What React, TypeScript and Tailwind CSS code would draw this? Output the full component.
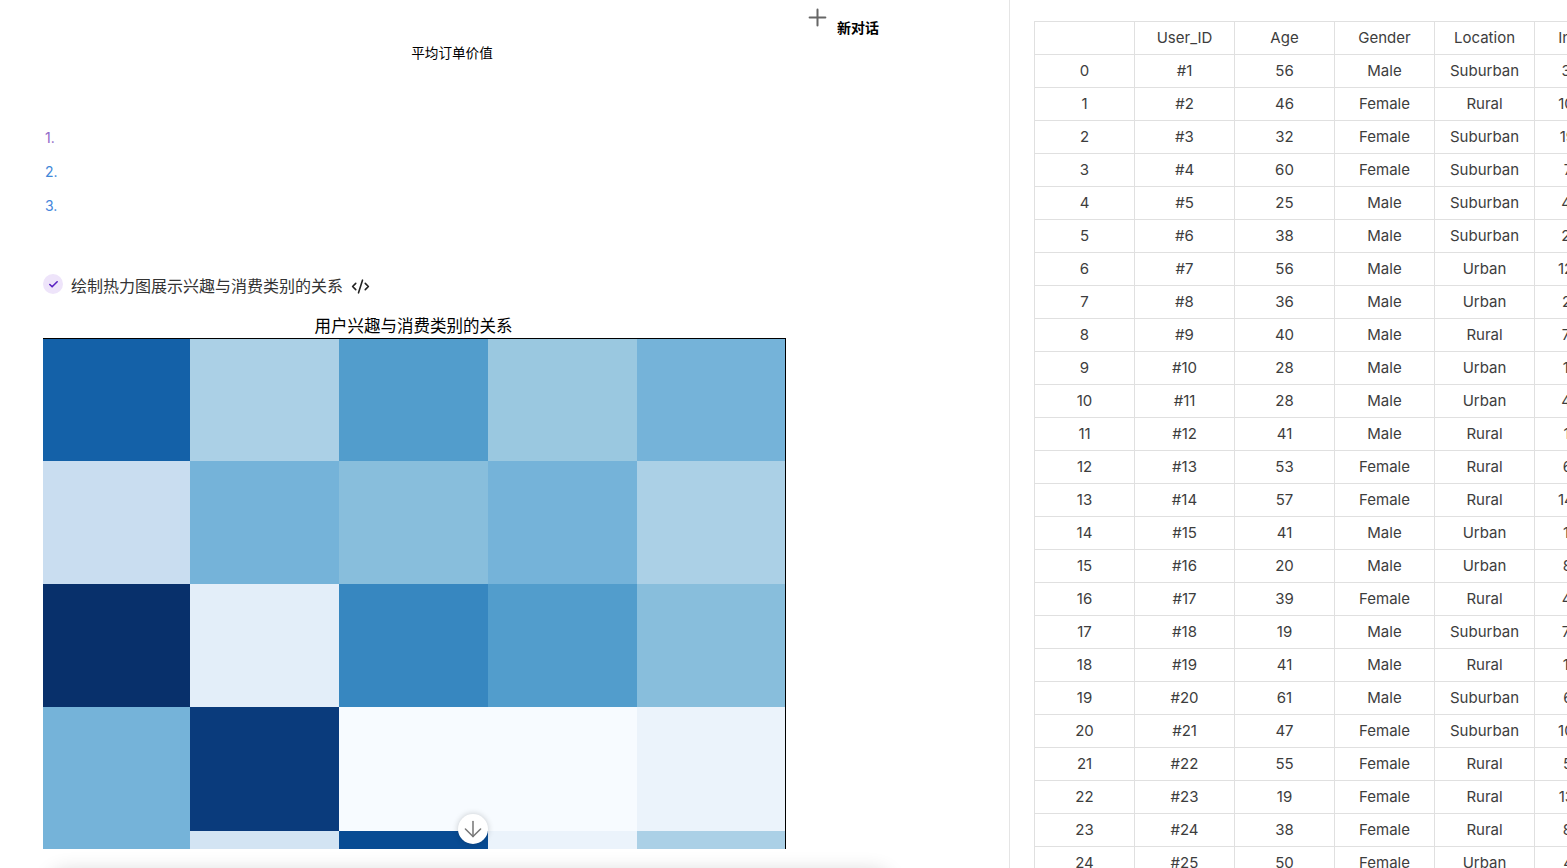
import { ArrowDown, Check, CodeXml, Plus } from 'lucide-react';

const cjk = "font-['Inter','Noto_Sans_CJK_SC',sans-serif]";

const heatmap = [
  ['#1461a8', '#abd0e6', '#529dcc', '#9ac8e0', '#75b3d9'],
  ['#c9ddf0', '#75b3d9', '#88bedc', '#75b3d9', '#abd0e6'],
  ['#08306b', '#e3eef9', '#3787c0', '#529dcc', '#88bedc'],
  ['#75b3d9', '#0a3b7c', '#f7fbff', '#f7fbff', '#ebf3fb'],
  ['#75b3d9', '#d3e4f3', '#084b93', '#ebf3fb', '#abd0e6'],
];

const listItems = [
  { label: '1.', color: 'text-[#9068c8]' },
  { label: '2.', color: 'text-[#3f87d8]' },
  { label: '3.', color: 'text-[#4486dc]' },
];

const columns = ['', 'User_ID', 'Age', 'Gender', 'Location', 'Income'];

const rows: [number, number, string, string, number][] = [
  [1, 56, 'Male', 'Suburban', 38037],
  [2, 46, 'Female', 'Rural', 103986],
  [3, 32, 'Female', 'Suburban', 191942],
  [4, 60, 'Female', 'Suburban', 71276],
  [5, 25, 'Male', 'Suburban', 42869],
  [6, 38, 'Male', 'Suburban', 29053],
  [7, 56, 'Male', 'Urban', 128406],
  [8, 36, 'Male', 'Urban', 26745],
  [9, 40, 'Male', 'Rural', 78560],
  [10, 28, 'Male', 'Urban', 18420],
  [11, 28, 'Male', 'Urban', 46392],
  [12, 41, 'Male', 'Rural', 17605],
  [13, 53, 'Female', 'Rural', 60581],
  [14, 57, 'Female', 'Rural', 148206],
  [15, 41, 'Male', 'Urban', 15938],
  [16, 20, 'Male', 'Urban', 84160],
  [17, 39, 'Female', 'Rural', 43527],
  [18, 19, 'Male', 'Suburban', 75092],
  [19, 41, 'Male', 'Rural', 12846],
  [20, 61, 'Male', 'Suburban', 63719],
  [21, 47, 'Female', 'Suburban', 106254],
  [22, 55, 'Female', 'Rural', 58301],
  [23, 19, 'Female', 'Rural', 132670],
  [24, 38, 'Female', 'Rural', 81495],
  [25, 50, 'Female', 'Urban', 47213],
];

const cellClass = 'h-[33px] border border-[#e0e0e0] p-0 text-center align-middle font-normal';

const App = () => (
  <div className={`flex h-[868px] w-full overflow-hidden bg-white ${cjk}`}>
    <main className="relative h-full w-[1010px] shrink-0 overflow-hidden border-r border-[#e5e5e5]">
      <div className="absolute left-[804px] top-[4px] flex items-start gap-[6px]">
        <Plus className="size-[27px] text-[#666666]" strokeWidth={1.8} />
        <span className="mt-[14px] text-[14px] font-semibold leading-[19px] text-black">新对话</span>
      </div>

      <div className="pl-[43px]">
        <p className="w-[818px] pt-[43px] text-center text-[13.6px] leading-[20px] text-black">平均订单价值</p>

        <ol className="mt-[65px] flex flex-col gap-[14px] pl-[2px] text-[14px] leading-[20px]">
          {listItems.map((item) => (
            <li key={item.label} className={item.color}>
              {item.label}
            </li>
          ))}
        </ol>

        <div className="mt-[58px] flex items-center">
          <span className="flex size-5 -translate-y-[2px] items-center justify-center rounded-full bg-[#eee4fa]">
            <Check className="size-[11px] text-[#5a21c2]" strokeWidth={3.5} />
          </span>
          <span className="ml-[8px] text-[16px] leading-[24px] text-[#333333]">绘制热力图展示兴趣与消费类别的关系</span>
          <CodeXml className="ml-[8px] size-[19px] text-[#222222]" strokeWidth={2} />
        </div>

        <h3 className="mt-[18px] w-[741px] text-center text-[16.5px] font-normal leading-[20px] text-black">
          用户兴趣与消费类别的关系
        </h3>

        <div className="mt-[2px] h-[511px] w-[743px] overflow-hidden border-r border-t border-black">
          <div className="grid grid-cols-[147px_149px_149px_149px_148px] grid-rows-[122px_123px_123px_124px_18px]">
            {heatmap.flat().map((color, index) => (
              <div key={index} style={{ backgroundColor: color }} />
            ))}
          </div>
        </div>
      </div>

      <button className="absolute left-[458px] top-[814px] flex size-[30px] items-center justify-center rounded-full bg-white shadow-[0_0_6px_rgba(0,0,0,0.2)]">
        <ArrowDown className="size-[26px] text-[#777777]" strokeWidth={1.4} />
      </button>

      <div className="absolute left-[50px] top-[871px] h-[100px] w-[840px] rounded-2xl bg-white shadow-[0_0_20px_rgba(0,0,0,0.16)]" />
    </main>

    <section className="min-w-0 flex-1 overflow-hidden pl-[24px] pt-[21px]">
      <table className="w-[601px] table-fixed border-collapse text-[15px] leading-[20px] text-[#3d3d3d]">
        <thead>
          <tr>
            {columns.map((name) => (
              <th key={name} className={`${cellClass} w-[100px]`}>
                {name}
              </th>
            ))}
          </tr>
        </thead>
        <tbody>
          {rows.map(([id, age, gender, location, income], index) => (
            <tr key={id}>
              <td className={cellClass}>{index}</td>
              <td className={cellClass}>#{id}</td>
              <td className={cellClass}>{age}</td>
              <td className={cellClass}>{gender}</td>
              <td className={cellClass}>{location}</td>
              <td className={cellClass}>{income}</td>
            </tr>
          ))}
        </tbody>
      </table>
    </section>
  </div>
);

export default App;
